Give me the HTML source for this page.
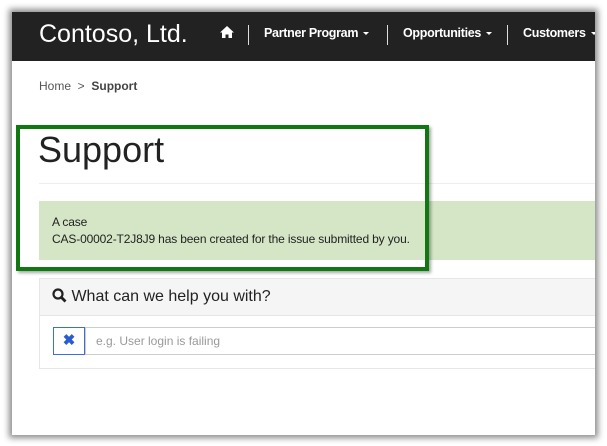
<!DOCTYPE html>
<html><head><style>
body{margin:0;width:607px;height:446px;background:#fff;position:relative;overflow:hidden;font-family:"Liberation Sans",sans-serif}
#frame{position:absolute;left:12px;top:12px;width:583px;height:423px;background:#fff;box-shadow:0 0 6px 3px rgba(0,0,0,.45);overflow:hidden}
#nav{position:absolute;left:0;top:0;width:583px;height:49px;background:#222}
.a{position:absolute;color:#fff;white-space:nowrap}
.sep{position:absolute;top:13px;width:1px;height:20px;background:#ddd}
.car{display:inline-block;border-left:3px solid transparent;border-right:3px solid transparent;border-top:3px solid #fff;vertical-align:middle;margin-left:5px}
</style></head><body>
<div id="frame">
<div id="nav">
<div class="a" style="left:27px;top:8px;font-size:25px">Contoso, Ltd.</div>
<svg style="position:absolute;left:208px;top:14px" width="14" height="13" viewBox="0 0 14 13"><path d="M7 0 L14 6.5 L12 6.5 L12 12 L8.5 12 L8.5 8.5 L5.5 8.5 L5.5 12 L2 12 L2 6.5 L0 6.5Z" fill="#fff"/></svg>
<div class="sep" style="left:236px"></div>
<div class="a" style="left:252px;top:14px;font-size:12.5px;font-weight:bold;letter-spacing:-0.3px">Partner Program<span class="car"></span></div>
<div class="sep" style="left:375px"></div>
<div class="a" style="left:391px;top:14px;font-size:12.5px;font-weight:bold;letter-spacing:-0.3px">Opportunities<span class="car"></span></div>
<div class="sep" style="left:495px"></div>
<div class="a" style="left:511px;top:14px;font-size:12.5px;font-weight:bold;letter-spacing:-0.3px">Customers<span class="car"></span></div>
</div>
<div style="position:absolute;left:27px;top:67px;font-size:12px;color:#555">Home &nbsp;&gt;&nbsp; <b style="color:#444">Support</b></div>
<div style="position:absolute;left:26px;top:117px;font-size:36px;color:#222">Support</div>
<div style="position:absolute;left:27px;top:171px;width:560px;height:1px;background:#eee"></div>
<div style="position:absolute;left:27px;top:189px;width:560px;height:59px;background:#d5e6c6;font-size:12px;color:#222;line-height:17px;letter-spacing:-0.15px"><div style="padding:13px 0 0 13px">A case<br>CAS-00002-T2J8J9 has been created for the issue submitted by you.</div></div>
<div style="position:absolute;left:27px;top:266px;width:560px;height:91px;border:1px solid #e6e6e6;box-sizing:border-box">
<div style="height:36px;background:#f5f5f5;border-bottom:1px solid #e6e6e6;font-size:16px;color:#222;line-height:36px;padding-left:12px">
<svg width="15" height="15" viewBox="0 0 15 15" style="vertical-align:-2px"><circle cx="6" cy="6" r="4.5" fill="none" stroke="#222" stroke-width="2.2"/><path d="M9 9 L13.5 13.5" stroke="#222" stroke-width="2.8"/></svg> What can we help you with?</div>
<div style="position:absolute;left:13px;top:48px;width:32px;height:28px;border:1px solid #3c6dd9;box-sizing:border-box;text-align:center;line-height:26px;color:#2a5cd0;font-weight:bold;font-size:15px">✖</div>
<div style="position:absolute;left:45px;top:48px;width:520px;height:28px;border:1px solid #ccc;box-sizing:border-box;font-size:12px;color:#999;line-height:26px;padding-left:10px">e.g. User login is failing</div>
</div>
</div>
<div style="position:absolute;left:16px;top:125px;width:413px;height:146px;border:4px solid #117711;box-sizing:border-box;box-shadow:2px 2px 3px rgba(0,0,0,.35)"></div>
</body></html>
